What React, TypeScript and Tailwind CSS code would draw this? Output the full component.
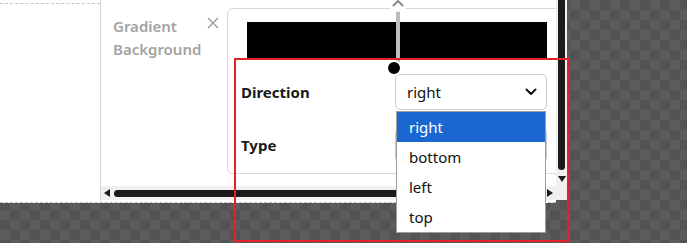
import { useState } from "react";

const options = ["right", "bottom", "left", "top"];

function Chevron({ up = false }: { up?: boolean }) {
  return (
    <svg width="12" height="8" viewBox="0 0 12 8" fill="none" className={up ? "rotate-180" : ""}>
      <path d="M1.5 1.5 6 6l4.5-4.5" stroke="currentColor" strokeWidth="2" strokeLinecap="round" strokeLinejoin="round" />
    </svg>
  );
}

function SelectBox({ value }: { value: string }) {
  return (
    <div className="flex h-[36px] w-[152px] items-center justify-between rounded-[5px] border border-[#c9c9d3] bg-white pl-[11px] pr-[9px] text-[15px] text-[#111]">
      <span>{value}</span>
      <Chevron />
    </div>
  );
}

export default function App() {
  const [selected] = useState("right");

  return (
    <div className="relative h-[243px] w-[687px] overflow-hidden bg-[repeating-conic-gradient(#5c5c5c_0_25%,#535353_0_50%)] bg-[length:20px_20px] font-['Noto_Sans','Open_Sans',sans-serif]">
      <div className="flex h-[203px] w-[567px]">
        <div className="w-[556px] border-b border-dashed border-[#bdbdbd] bg-white">
          <div className="flex h-full">
            <div className="mt-[3px] w-[100px] border-t border-dashed border-[#c4c4c4]" />
            <div className="flex w-[456px] flex-col border-l border-[#d6d6d6]">
              <div className="flex h-[186px] overflow-hidden">
                <div className="w-[126px] shrink-0 pl-[12px] pt-[15px]">
                  <div className="flex justify-between pr-[8px]">
                    <span className="text-[15px] leading-[23px] font-semibold text-[#a3a3a3]">
                      Gradient
                      <br />
                      Background
                    </span>
                    <svg width="12" height="12" viewBox="0 0 12 12" className="mt-[2px] text-[#9a9a9a]">
                      <path d="M1 1l10 10M11 1 1 11" stroke="currentColor" strokeWidth="1.4" />
                    </svg>
                  </div>
                </div>
                <div className="mt-[8px] h-[166px] w-[340px] shrink-0 rounded-[6px] border border-[#d9d9d9] bg-white">
                  <div className="ml-[19px] mt-[13px] h-[36px] w-[300px] bg-black" />
                  <div className="mt-[16px] flex items-center pl-[13px]">
                    <span className="w-[154px] text-[15px] font-bold text-[#1a1a1a]">Direction</span>
                    <SelectBox value={selected} />
                  </div>
                  <div className="mt-[18px] flex items-center pl-[13px]">
                    <span className="w-[154px] text-[15px] font-bold text-[#1a1a1a]">Type</span>
                    <div className="h-[34px] w-[152px] rounded-[5px] border border-[#c9c9d3] bg-white" />
                  </div>
                </div>
              </div>
              <div className="flex h-[14px] items-center bg-[#f0f0f0] px-[3px]">
                <svg width="6" height="8" viewBox="0 0 6 8"><path d="M6 0v8L0 4z" fill="#1a1a1a" /></svg>
                <div className="mx-[4px] h-[7px] flex-1 rounded-full bg-[#1a1a1a]" />
                <svg width="6" height="8" viewBox="0 0 6 8"><path d="M0 0v8l6-4z" fill="#1a1a1a" /></svg>
              </div>
            </div>
          </div>
        </div>
        <div className="flex h-[200px] w-[11px] flex-col items-center bg-[#f0f0f0]">
          <div className="h-[170px] w-[7px] rounded-b-full bg-[#1a1a1a]" />
          <svg width="8" height="6" viewBox="0 0 8 6" className="mt-[6px]"><path d="M0 0h8L4 6z" fill="#1a1a1a" /></svg>
        </div>
      </div>

      {/* gradient stop handle */}
      <div className="absolute left-[396px] top-[10px] h-[52px] w-[4px] bg-[#bdbdbd]" />
      <div className="absolute left-[388px] top-[-8px] flex h-[20px] w-[20px] items-end justify-center rounded-full bg-white pb-[5px] text-[#8a8a8a]">
        <Chevron up />
      </div>
      <div className="absolute left-[386px] top-[60px] h-[16px] w-[16px] rounded-full border-2 border-white bg-black" />

      {/* select dropdown */}
      <div className="absolute left-[396px] top-[111px] w-[150px] border border-[#9c9c9c] bg-white text-[15px]">
        {options.map((o) => (
          <div
            key={o}
            className={
              o === selected
                ? "flex h-[30px] items-center bg-[#1a67d2] pl-[12px] text-white"
                : "flex h-[30px] items-center pl-[12px] text-[#111]"
            }
          >
            {o}
          </div>
        ))}
      </div>

      {/* highlight */}
      <div className="absolute left-[234px] top-[58px] h-[184px] w-[335px] border-2 border-[#e5222a]" />
    </div>
  );
}
